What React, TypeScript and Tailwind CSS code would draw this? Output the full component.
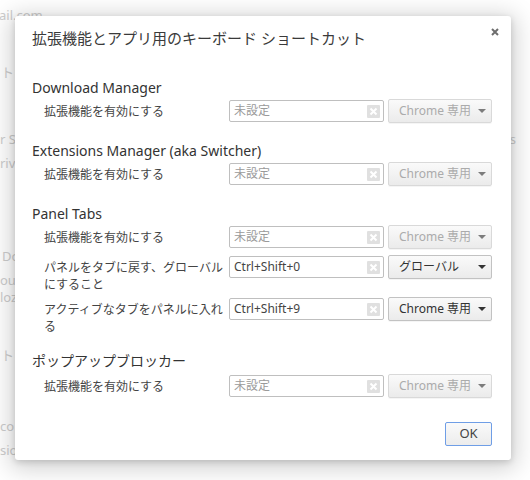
import React from 'react'

const FONT = '"Noto Sans", "Noto Sans CJK JP", sans-serif'

type Row = {
  label: string
  value?: string
  scope: string
  enabled?: boolean
}

type Section = {
  title: string
  rows: Row[]
  cjk?: boolean
}

const sections: Section[] = [
  {
    title: 'Download Manager',
    rows: [{ label: '拡張機能を有効にする', scope: 'Chrome 専用' }],
  },
  {
    title: 'Extensions Manager (aka Switcher)',
    rows: [{ label: '拡張機能を有効にする', scope: 'Chrome 専用' }],
  },
  {
    title: 'Panel Tabs',
    rows: [
      { label: '拡張機能を有効にする', scope: 'Chrome 専用' },
      {
        label: 'パネルをタブに戻す、グローバルにすること',
        value: 'Ctrl+Shift+0',
        scope: 'グローバル',
        enabled: true,
      },
      {
        label: 'アクティブなタブをパネルに入れる',
        value: 'Ctrl+Shift+9',
        scope: 'Chrome 専用',
        enabled: true,
      },
    ],
  },
  {
    title: 'ポップアップブロッカー',
    rows: [{ label: '拡張機能を有効にする', scope: 'Chrome 専用' }],
    cjk: true,
  },
]

function ClearIcon() {
  return (
    <span className="flex h-[13px] w-[13px] items-center justify-center rounded-[1px] bg-[#e0e0e0]">
      <svg width="9" height="9" viewBox="0 0 9 9">
        <path d="M1.5 1.5L7.5 7.5M7.5 1.5L1.5 7.5" stroke="#fff" strokeWidth="2" />
      </svg>
    </span>
  )
}

function ScopeSelect({ scope, enabled }: { scope: string; enabled?: boolean }) {
  return (
    <div
      className={`flex h-[24px] w-[104px] items-center justify-between rounded-[2px] border bg-gradient-to-b from-[#fafafa] to-[#ebebeb] pl-[10px] pr-[5px] text-[12px] shadow-[0_1px_0_rgba(0,0,0,0.04)] ${
        enabled ? 'border-[#c2c2c2] text-[#333]' : 'border-[#d9d9d9] text-[#ababab]'
      }`}
    >
      <span className="whitespace-nowrap">{scope}</span>
      <svg width="8" height="4" viewBox="0 0 8 4">
        <path d="M0 0H8L4 4Z" fill={enabled ? '#333' : '#7c7c7c'} />
      </svg>
    </div>
  )
}

function ShortcutRow({ row }: { row: Row }) {
  return (
    <div className="flex min-h-[26px] items-start pl-3">
      <div className="w-[185px] pt-[4px] pr-1 text-[12px] leading-[17px] text-[#444]">{row.label}</div>
      <div className="flex items-center gap-1">
        <div className="flex h-[22px] w-[155px] items-center justify-between rounded-[2px] border border-[#bfbfbf] bg-white pl-[4px] pr-[3px] text-[12px]">
          <span className={row.value ? 'text-[#444]' : 'text-[#9a9a9a]'}>{row.value ?? '未設定'}</span>
          <ClearIcon />
        </div>
        <ScopeSelect scope={row.scope} enabled={row.enabled} />
      </div>
    </div>
  )
}

function BackgroundPage() {
  return (
    <div className="flex flex-col text-[13px] leading-[16px] text-[#cdcdcd]">
      <div className="mt-[7px] ml-[-1px] whitespace-nowrap">ail.com</div>
      <div className="mt-[41px] ml-[1px] whitespace-nowrap">トキ</div>
      <div className="mt-[51px] flex justify-between">
        <span className="whitespace-nowrap">r S</span>
        <span className="mr-[14px]">s</span>
      </div>
      <div className="mt-[8px] whitespace-nowrap">rivacy</div>
      <div className="mt-[77px] ml-[2px] whitespace-nowrap">Do</div>
      <div className="mt-[8px] whitespace-nowrap">oub</div>
      <div className="mt-[1px] whitespace-nowrap">loz</div>
      <div className="mt-[42px] ml-[1px] whitespace-nowrap">トキ</div>
      <div className="mt-[55px] whitespace-nowrap">co</div>
      <div className="mt-[8px] whitespace-nowrap">sion</div>
    </div>
  )
}

export default function App() {
  return (
    <div className="relative h-[480px] w-[530px] overflow-hidden bg-white" style={{ fontFamily: FONT }}>
      <BackgroundPage />

      <div className="absolute left-[15px] top-[16px] flex h-[444px] w-[496px] flex-col rounded-[3px] bg-white pt-3 pr-[19px] pb-[14px] pl-[17px] shadow-[0_4px_23px_5px_rgba(0,0,0,0.18),0_2px_6px_rgba(0,0,0,0.15)]">
        <button className="absolute right-[10px] top-[10px] flex h-[12px] w-[12px] items-center justify-center">
          <svg width="8" height="8" viewBox="0 0 8 8">
            <path d="M1 1L7 7M7 1L1 7" stroke="#6e6e6e" strokeWidth="2" />
          </svg>
        </button>

        <h1 className="text-[15px] leading-[20px] text-[#3a3a3a]">拡張機能とアプリ用のキーボード ショートカット</h1>

        <div className="mt-[30px] flex flex-col gap-[16px]">
          {sections.map((s) => (
            <div key={s.title}>
              <h2 className={`text-[14px] leading-[20px] text-[#333] ${s.cjk ? 'mb-[3px]' : 'mb-[1px]'}`}>{s.title}</h2>
              <div className="flex flex-col gap-1">
                {s.rows.map((r, i) => (
                  <ShortcutRow key={i} row={r} />
                ))}
              </div>
            </div>
          ))}
        </div>

        <div className="mt-auto flex justify-end">
          <button className="h-[24px] w-[47px] rounded-[2px] border border-[#6f9ee6] bg-gradient-to-b from-[#fafafa] to-[#ececec] text-[13px] text-[#444]">
            OK
          </button>
        </div>
      </div>
    </div>
  )
}
